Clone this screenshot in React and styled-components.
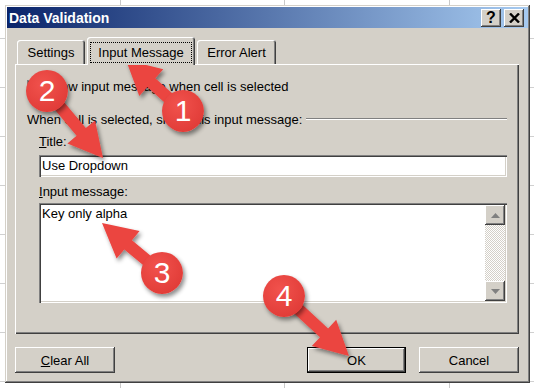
import React from "react";
import styled, { createGlobalStyle } from "styled-components";

const GlobalStyle = createGlobalStyle`
  body {
    margin: 0;
    background: #fff;
    font-family: "Liberation Sans", Arial, sans-serif;
  }
`;

const FACE = "#d4d0c8";

const raised = `
  box-shadow: inset -1px -1px #404040, inset 1px 1px #fff,
    inset -2px -2px #808080, inset 2px 2px ${FACE};
`;

const sunken = `
  box-shadow: inset 1px 1px #808080, inset 2px 2px #404040,
    inset -1px -1px #fff, inset -2px -2px ${FACE};
`;

const arrows = [
  { from: [183, 111], to: [126, 60] },
  { from: [47, 91], to: [103, 158] },
  { from: [162, 273], to: [102, 223] },
  { from: [283, 295], to: [349, 356] },
];

const badges = [
  { n: 1, x: 183, y: 111 },
  { n: 2, x: 47, y: 91 },
  { n: 3, x: 162, y: 273 },
  { n: 4, x: 284, y: 296 },
];

// shaft + head as one polygon, starting at the badge centre
const arrowPoints = ([sx, sy], [tx, ty], shaft = 12, headLen = 34, headW = 36) => {
  const len = Math.hypot(tx - sx, ty - sy);
  const ux = (tx - sx) / len;
  const uy = (ty - sy) / len;
  const px = -uy;
  const py = ux;
  const bx = tx - ux * headLen;
  const by = ty - uy * headLen;
  const h = shaft / 2;
  const H = headW / 2;
  return [
    [sx + px * h, sy + py * h],
    [bx + px * h, by + py * h],
    [bx + px * H, by + py * H],
    [tx, ty],
    [bx - px * H, by - py * H],
    [bx - px * h, by - py * h],
    [sx - px * h, sy - py * h],
  ]
    .map((p) => p.map((v) => v.toFixed(1)).join(","))
    .join(" ");
};

const App = () => {
  return (
    <Page>
      <GlobalStyle />
      <Dialog>
        <TitleBar>
          <TitleText>Data Validation</TitleText>
          <CaptionButton>?</CaptionButton>
          <CaptionButton>
            <svg width="11" height="10" viewBox="0 0 11 10">
              <path d="M1 0.5 L10 9.5 M10 0.5 L1 9.5" stroke="#000" strokeWidth="2.4" />
            </svg>
          </CaptionButton>
        </TitleBar>

        <Body>
          <TabRow>
            <Tab width={68}>Settings</Tab>
            <Tab width={108} selected>
              <FocusLabel>Input Message</FocusLabel>
            </Tab>
            <Tab width={79}>Error Alert</Tab>
          </TabRow>

          <Panel>
            <CheckRow>
              <CheckBox>
                <svg width="9" height="9" viewBox="0 0 9 9">
                  <path d="M1 4 L3.5 6.5 L8 1.5" stroke="#000" strokeWidth="2" fill="none" />
                </svg>
              </CheckBox>
              <Label>
                <u>S</u>how input message when cell is selected
              </Label>
            </CheckRow>

            <SectionRow>
              <Label>When cell is selected, show this input message:</Label>
              <EtchedLine />
            </SectionRow>

            <Indent>
              <FieldLabel top={6}>
                <u>T</u>itle:
              </FieldLabel>
              <TextField>Use Dropdown</TextField>

              <FieldLabel top={7}>
                <u>I</u>nput message:
              </FieldLabel>
              <MessageBox>
                <MessageText>Key only alpha</MessageText>
                <ScrollBar>
                  <ScrollButton>
                    <svg width="9" height="5" viewBox="0 0 9 5">
                      <polygon points="4.5,0 9,5 0,5" fill="#808080" />
                    </svg>
                  </ScrollButton>
                  <ScrollTrack />
                  <ScrollButton>
                    <svg width="9" height="5" viewBox="0 0 9 5">
                      <polygon points="0,0 9,0 4.5,5" fill="#808080" />
                    </svg>
                  </ScrollButton>
                </ScrollBar>
              </MessageBox>
            </Indent>
          </Panel>

          <ButtonRow>
            <Button>
              <u>C</u>lear All
            </Button>
            <Spacer />
            <Button isDefault>OK</Button>
            <Button gap={13}>Cancel</Button>
          </ButtonRow>
        </Body>
      </Dialog>

      <Overlay>
        <svg width="534" height="388" viewBox="0 0 534 388">
          <defs>
            <filter id="arrowShadow" x="-20%" y="-20%" width="140%" height="140%">
              <feDropShadow dx="2" dy="3" stdDeviation="2" floodColor="#000" floodOpacity="0.45" />
            </filter>
          </defs>
          {arrows.map((a, i) => (
            <polygon
              key={i}
              points={arrowPoints(a.from, a.to)}
              fill="#eb4541"
              filter="url(#arrowShadow)"
            />
          ))}
        </svg>
        {badges.map((b) => (
          <Badge key={b.n} x={b.x} y={b.y}>
            {b.n}
          </Badge>
        ))}
      </Overlay>
    </Page>
  );
};

const Page = styled.div`
  position: relative;
  width: 534px;
  height: 388px;
  box-sizing: border-box;
  padding: 5px 0 0 5px;
  overflow: hidden;
  background-color: #fff;
  background-image: linear-gradient(
      to right,
      transparent 120px,
      #c9c9c9 120px,
      #c9c9c9 121px,
      transparent 121px,
      transparent 284px,
      #c9c9c9 284px,
      #c9c9c9 285px,
      transparent 285px,
      transparent 449px,
      #c9c9c9 449px,
      #c9c9c9 450px,
      transparent 450px
    ),
    repeating-linear-gradient(
      to bottom,
      transparent 0,
      transparent 38px,
      #d0d0d0 38px,
      #d0d0d0 39px,
      transparent 39px,
      transparent 49px
    );
`;

const Dialog = styled.div`
  width: 525px;
  height: 378px;
  box-sizing: border-box;
  padding: 2px;
  display: flex;
  flex-direction: column;
  background: ${FACE};
  box-shadow: inset -1px -1px #404040, inset 1px 1px ${FACE},
    inset -2px -2px #808080, inset 2px 2px #fff;
  font-size: 13px;
  color: #000;
`;

const TitleBar = styled.div`
  height: 21px;
  display: flex;
  align-items: center;
  padding: 0 4px 0 2px;
  background: linear-gradient(to right, #0a246a, #a6caf0);
`;

const TitleText = styled.div`
  flex: 1;
  color: #fff;
  font-weight: bold;
  font-size: 14px;
`;

const CaptionButton = styled.div`
  width: 20px;
  height: 18px;
  margin-left: 3px;
  display: flex;
  align-items: center;
  justify-content: center;
  background: ${FACE};
  font-weight: bold;
  font-size: 16px;
  line-height: 18px;
  ${raised}
`;

const Body = styled.div`
  flex: 1;
  display: flex;
  flex-direction: column;
  padding: 9px 9px 0 8px;
`;

const TabRow = styled.div`
  height: 27px;
  display: flex;
  align-items: flex-end;
  padding-left: 2px;
`;

const Tab = styled.div`
  position: relative;
  z-index: ${(p) => (p.selected ? 1 : 0)};
  width: ${(p) => p.width}px;
  height: ${(p) => (p.selected ? 28 : 24)}px;
  margin: 0 2px ${(p) => (p.selected ? -1 : 0)}px 0;
  padding-top: ${(p) => (p.selected ? 3 : 0)}px;
  box-sizing: border-box;
  display: flex;
  align-items: center;
  justify-content: center;
  background: ${FACE};
  border-radius: 3px 3px 0 0;
  box-shadow: inset 1px 1px #fff, inset -1px 0 #404040, inset -2px 0 #808080;
`;

const FocusLabel = styled.span`
  height: 21px;
  box-sizing: border-box;
  padding: 0 7px;
  display: flex;
  align-items: center;
  border: 1px dotted #000;
`;

const Panel = styled.div`
  height: 270px;
  box-sizing: border-box;
  padding: 16px 12px 0 12px;
  display: flex;
  flex-direction: column;
  background: ${FACE};
  box-shadow: inset 1px 1px #fff, inset -1px -1px #404040, inset -2px -2px #808080;
`;

const CheckRow = styled.div`
  height: 13px;
  display: flex;
  align-items: center;
  gap: 5px;
`;

const CheckBox = styled.div`
  width: 13px;
  height: 13px;
  display: flex;
  align-items: center;
  justify-content: center;
  background: #fff;
  ${sunken}
`;

const Label = styled.span`
  line-height: 16px;
  white-space: nowrap;
`;

const SectionRow = styled.div`
  margin-top: 19px;
  height: 16px;
  display: flex;
  align-items: center;
`;

const EtchedLine = styled.div`
  flex: 1;
  margin: -3px 0 0 4px;
  border-top: 1px solid #808080;
  border-bottom: 1px solid #fff;
`;

const Indent = styled.div`
  margin-left: 12px;
  display: flex;
  flex-direction: column;
`;

const FieldLabel = styled.div`
  margin-top: ${(p) => p.top}px;
  line-height: 16px;
`;

const TextField = styled.div`
  margin-top: 5px;
  height: 22px;
  padding-left: 3px;
  line-height: 22px;
  background: #fff;
  ${sunken}
`;

const MessageBox = styled.div`
  margin-top: 3px;
  height: 100px;
  display: flex;
  background: #fff;
  ${sunken}
`;

const MessageText = styled.div`
  flex: 1;
  padding: 3px 0 0 3px;
  line-height: 16px;
`;

const ScrollBar = styled.div`
  width: 20px;
  margin: 2px 2px 2px 0;
  display: flex;
  flex-direction: column;
`;

const ScrollButton = styled.div`
  height: 20px;
  display: flex;
  align-items: center;
  justify-content: center;
  background: ${FACE};
  ${raised}
`;

const ScrollTrack = styled.div`
  flex: 1;
  background: repeating-conic-gradient(#fff 0 25%, ${FACE} 0 50%) 0 0 / 2px 2px;
`;

const ButtonRow = styled.div`
  margin-top: 13px;
  height: 26px;
  display: flex;
`;

const Spacer = styled.div`
  flex: 1;
`;

const Button = styled.div`
  width: ${(p) => (p.isDefault ? 99 : 100)}px;
  height: 26px;
  margin-left: ${(p) => p.gap || 0}px;
  display: flex;
  align-items: center;
  justify-content: center;
  background: ${FACE};
  ${(p) =>
    p.isDefault
      ? `box-shadow: inset 0 0 0 1px #000, inset -2px -2px #404040, inset 2px 2px #fff,
          inset -3px -3px #808080;`
      : raised}
`;

const Overlay = styled.div`
  position: absolute;
  inset: 0;
  pointer-events: none;
`;

const Badge = styled.div`
  position: absolute;
  left: ${(p) => p.x - 21}px;
  top: ${(p) => p.y - 21}px;
  width: 42px;
  height: 42px;
  border-radius: 50%;
  display: flex;
  align-items: center;
  justify-content: center;
  background: radial-gradient(circle at 40% 35%, #f1524d, #dc3531);
  box-shadow: 2px 3px 4px rgba(0, 0, 0, 0.45);
  color: #fff;
  font-size: 30px;
  line-height: 42px;
`;

export default App;
